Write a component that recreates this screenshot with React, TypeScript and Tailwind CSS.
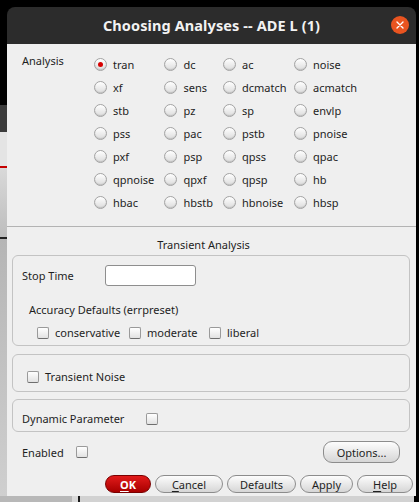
import React from "react";

const Radio = ({ checked = false }: { checked?: boolean }) => (
  <span className="w-[13px] h-[13px] shrink-0 rounded-full border border-[#a3a3a3] bg-gradient-to-b from-[#ffffff] to-[#dcdcdc] shadow-[inset_0_-1px_1px_rgba(0,0,0,0.12)] flex items-center justify-center">
    {checked && <span className="w-[5px] h-[5px] rounded-full bg-[#d60000]" />}
  </span>
);

const Check = () => (
  <span className="w-[12px] h-[12px] shrink-0 rounded-[2px] border border-[#9a9a9a] border-b-[#6e6e6e] bg-gradient-to-b from-[#ffffff] to-[#e2e2e2]" />
);

const rows: string[][] = [
  ["tran", "dc", "ac", "noise"],
  ["xf", "sens", "dcmatch", "acmatch"],
  ["stb", "pz", "sp", "envlp"],
  ["pss", "pac", "pstb", "pnoise"],
  ["pxf", "psp", "qpss", "qpac"],
  ["qpnoise", "qpxf", "qpsp", "hb"],
  ["hbac", "hbstb", "hbnoise", "hbsp"],
];

const Btn = ({ children, w }: { children: React.ReactNode; w: string }) => (
  <div
    className={`${w} h-[18px] rounded-full border border-[#8c8c8c] bg-gradient-to-b from-[#fdfdfd] to-[#d6d6d6] flex items-center justify-center text-[11px] text-[#1e1e1e]`}
  >
    {children}
  </div>
);

export default function App() {
  return (
    <div className="w-[419px] h-[502px] bg-black flex flex-col overflow-hidden font-['Noto_Sans',sans-serif] text-[#1e1e1e]">
      <div className="h-[7px] shrink-0" />
      <div className="flex h-[489px] shrink-0">
        {/* background app strip on the left */}
        <div className="w-[7px] shrink-0 flex flex-col">
          <div className="h-[98px] bg-black" />
          <div className="h-[27px] bg-[#3b3b3b]" />
          <div className="h-[34px] bg-[#e4e4e4]" />
          <div className="h-[2px] bg-[#c40000]" />
          <div className="h-[69px] bg-gradient-to-b from-[#d9d9d9] to-[#bdbdbd]" />
          <div className="h-[2px] bg-[#222]" />
          <div className="flex-1 bg-gradient-to-b from-[#b5b5b5] to-[#cfcfcf]" />
        </div>

        {/* window */}
        <div className="w-[409px] shrink-0 flex flex-col">
          <div className="h-[37px] shrink-0 rounded-t-[8px] bg-[#2c2c2c] relative flex items-center justify-center">
            <span className="text-[14.5px] font-bold text-[#f2f2f2] tracking-[0.1px]">
              Choosing Analyses -- ADE L (1)
            </span>
            <span className="absolute right-[7px] top-[9px] w-[18px] h-[18px] rounded-full bg-[#e95420] flex items-center justify-center">
              <svg width="8" height="8" viewBox="0 0 8 8">
                <path d="M1 1L7 7M7 1L1 7" stroke="#fff" strokeWidth="1.4" strokeLinecap="round" />
              </svg>
            </span>
          </div>

          <div className="flex-1 bg-[#efefef] flex flex-col text-[11px] leading-[15px]">
            {/* analysis radios */}
            <div className="flex pt-[9px]">
              <div className="w-[86.5px] pl-[15px] shrink-0">Analysis</div>
              <div className="grid grid-cols-[70.5px_58.5px_71px_auto]">
                {rows.flat().map((name, i) => (
                  <div key={i} className="h-[23px] flex items-center gap-[6.5px]">
                    <Radio checked={name === "tran"} />
                    <span>{name}</span>
                  </div>
                ))}
              </div>
            </div>

            <div className="mt-[12px] h-px bg-[#b3b3b3]" />

            <div className="mt-[10px] text-center pr-[16px]">Transient Analysis</div>

            {/* group 1 */}
            <div className="mt-[3px] ml-[5px] mr-[6px] h-[91px] rounded-[6px] border border-[#c3c3c3] flex flex-col">
              <div className="flex items-center pt-[9px] pl-[9px]">
                <span className="w-[83px]">Stop Time</span>
                <div className="w-[91px] h-[21px] bg-white border border-[#8e8e8e] rounded-[3px]" />
              </div>
              <div className="mt-[16px] pl-[16px]">Accuracy Defaults (errpreset)</div>
              <div className="mt-[8px] pl-[24px] flex items-center">
                <div className="w-[92px] flex items-center gap-[6px]">
                  <Check />
                  <span>conservative</span>
                </div>
                <div className="w-[80px] flex items-center gap-[6px]">
                  <Check />
                  <span>moderate</span>
                </div>
                <div className="flex items-center gap-[6px]">
                  <Check />
                  <span>liberal</span>
                </div>
              </div>
            </div>

            {/* group 2 */}
            <div className="mt-[8px] ml-[5px] mr-[6px] h-[38px] rounded-[6px] border border-[#c3c3c3] pt-[14px] pl-[14px]">
              <div className="flex items-center gap-[6px]">
                <Check />
                <span>Transient Noise</span>
              </div>
            </div>

            {/* group 3 */}
            <div className="mt-[7px] ml-[5px] mr-[6px] h-[33px] rounded-[6px] border border-[#c3c3c3] pt-[11px] pl-[9px]">
              <div className="flex items-center">
                <span className="w-[124px]">Dynamic Parameter</span>
                <Check />
              </div>
            </div>

            {/* enabled / options */}
            <div className="mt-[9px] h-[22px] flex items-center justify-between pl-[15px] pr-[16px]">
              <div className="flex items-center">
                <span className="w-[54px]">Enabled</span>
                <Check />
              </div>
              <div className="w-[77px] h-[22px] rounded-[9px] border border-[#8c8c8c] bg-gradient-to-b from-[#fdfdfd] to-[#d6d6d6] flex items-center justify-center">
                Options...
              </div>
            </div>

            {/* bottom buttons */}
            <div className="mt-[12px] flex justify-end pr-[3px] gap-[4px]">
              <div className="w-[46px] h-[18px] rounded-full border border-[#7a0000] bg-gradient-to-b from-[#e21a1a] to-[#a80000] flex items-center justify-center text-white font-bold text-[11px]">
                <span className="underline underline-offset-2">O</span>K
              </div>
              <Btn w="w-[68px]">
                <span className="underline underline-offset-2">C</span>ancel
              </Btn>
              <Btn w="w-[69px]">Defaults</Btn>
              <Btn w="w-[53px]">Apply</Btn>
              <Btn w="w-[56px]">
                <span className="underline underline-offset-2">H</span>elp
              </Btn>
            </div>
          </div>
        </div>
        <div className="flex-1 bg-black" />
      </div>
      <div className="flex-1 bg-[#cfcfcf] flex">
        <div className="w-[72px] bg-[#b8b8b8]" />
        <div className="w-[6px] bg-[#d9d9d9]" />
        <div className="w-[2px] bg-[#1a1a1a]" />
        <div className="flex-1 bg-[#d2d2d2]" />
        <div className="w-[5px] bg-black" />
      </div>
    </div>
  );
}
